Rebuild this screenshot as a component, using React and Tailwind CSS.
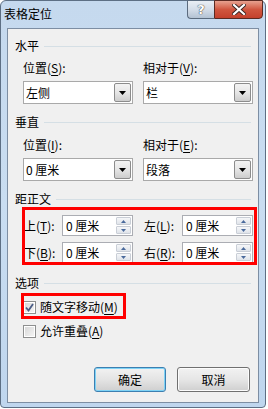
import React from 'react';

function U({ children }) {
  return <span className="underline underline-offset-[2px] decoration-[1px]">{children}</span>;
}

function Header({ title, className = '' }) {
  return (
    <div className={`flex items-center h-[14px] pl-[7px] pr-[7px] gap-[5px] ${className}`}>
      <span className="leading-none">{title}</span>
      <div className="flex-1 h-px bg-[#d5dfe5]" />
    </div>
  );
}

function Combo({ value }) {
  return (
    <div className="h-[23px] flex bg-white border border-[#a9a9a9]">
      <div className="flex-1 flex items-center pl-[2px] leading-none">{value}</div>
      <div className="w-[17px] m-px ml-0 border border-[#8c8c8c] rounded-[2px] bg-gradient-to-b from-[#f3f3f3] via-[#e6e6e6] to-[#cdcdcd] flex items-center justify-center">
        <svg width="7" height="4" viewBox="0 0 7 4"><path d="M0 0h7L3.5 4z" fill="#000" /></svg>
      </div>
    </div>
  );
}

function Spin({ value }) {
  return (
    <div className="w-[71px] h-[21px] flex bg-white border border-[#abadb3]">
      <div className="flex-1 flex items-center pl-[3px] leading-none">{value}</div>
      <div className="w-[15px] flex flex-col gap-px py-px mr-px">
        <div className="flex-1 border border-[#c9ced6] rounded-[1px] bg-gradient-to-b from-[#f6f7f9] to-[#dfe3e9] flex items-center justify-center">
          <svg width="5" height="3" viewBox="0 0 5 3"><path d="M2.5 0L5 3H0z" fill="#4a6a9c" /></svg>
        </div>
        <div className="flex-1 border border-[#c9ced6] rounded-[1px] bg-gradient-to-b from-[#f6f7f9] to-[#dfe3e9] flex items-center justify-center">
          <svg width="5" height="3" viewBox="0 0 5 3"><path d="M0 0h5L2.5 3z" fill="#4a6a9c" /></svg>
        </div>
      </div>
    </div>
  );
}

function SpinField({ label, k, rest, value }) {
  return (
    <div className="flex items-center">
      <span className="w-[39px] pl-px leading-none">{label}(<U>{k}</U>){rest}</span>
      <Spin value={value} />
    </div>
  );
}

function Check({ checked }) {
  return (
    <div className="w-[13px] h-[13px] border border-[#8e8f8f] bg-white p-px">
      <div className="w-full h-full bg-gradient-to-br from-[#d9d9d9] to-[#f4f4f4] flex items-center justify-center">
        {checked && (
          <svg width="9" height="9" viewBox="0 0 9 9">
            <path d="M1 4.5L3.5 7.5L8 1" stroke="#4b5d86" strokeWidth="1.8" fill="none" />
          </svg>
        )}
      </div>
    </div>
  );
}

export default function App() {
  return (
    <div className="w-[268px] h-[409px] bg-white font-['Noto_Sans_CJK_SC',sans-serif] text-[12px] text-black">
      <div className="relative w-[266px] h-[408px] rounded-t-[6px] rounded-b-[4px] border border-[#5d6f84] bg-gradient-to-b from-[#c5d9ee] via-[#c9ddf1] to-[#bfd6ee] px-[6px]">
        {/* title bar */}
        <div className="h-[27px] flex items-start">
          <span className="mt-[7px] -ml-[3px] text-[12px] leading-none">表格定位</span>
          <div className="ml-auto -mr-[4px] flex -mt-px">
            <div className="w-[27px] h-[19px] rounded-bl-[4px] border border-[#5b6b7e] border-r-0 bg-gradient-to-b from-[#e9eef4] via-[#d4dde8] to-[#b3c2d3] flex items-center justify-center">
              <span className="text-white font-['DejaVu_Sans',sans-serif] font-bold text-[13px] leading-none [text-shadow:0_0_1px_#333,0_0_1px_#333]">?</span>
            </div>
            <div className="w-[49px] h-[19px] rounded-br-[4px] border border-[#5b2a22] bg-gradient-to-b from-[#e7a18f] via-[#d0563f] to-[#c3402c] flex items-center justify-center">
              <svg width="14" height="11" viewBox="0 0 14 11">
                <path d="M2 1l10 9M12 1L2 10" stroke="#3a2420" strokeWidth="4" strokeLinecap="square" />
                <path d="M2 1l10 9M12 1L2 10" stroke="#fff" strokeWidth="2.2" strokeLinecap="square" />
              </svg>
            </div>
          </div>
        </div>

        {/* client area */}
        <div className="h-[375px] border border-[#7d8ea3] bg-[#f0f0f0] pt-[10px]">
          <Header title="水平" />
          <div className="grid grid-cols-[110px_110px] gap-x-[10px] pl-[15px] mt-[9px]">
            <span className="h-[14px] leading-none">位置(<U>S</U>):</span>
            <span className="h-[14px] leading-none">相对于(<U>V</U>):</span>
            <div className="mt-[5px]"><Combo value="左侧" /></div>
            <div className="mt-[5px]"><Combo value="栏" /></div>
          </div>

          <Header title="垂直" className="mt-[11px]" />
          <div className="grid grid-cols-[110px_110px] gap-x-[10px] pl-[15px] mt-[10px]">
            <span className="h-[14px] leading-none">位置(<U>I</U>):</span>
            <span className="h-[14px] leading-none">相对于(<U>E</U>):</span>
            <div className="mt-[5px]"><Combo value="0 厘米" /></div>
            <div className="mt-[5px]"><Combo value="段落" /></div>
          </div>

          <Header title="距正文" className="mt-[11px]" />
          <div className="relative ml-[15px] w-[230px] mt-[9px] grid grid-cols-[110px_110px] gap-x-[10px] gap-y-[6px]">
            <SpinField label="上" k="T" rest=":" value="0 厘米" />
            <SpinField label="左" k="L" rest=":" value="0 厘米" />
            <SpinField label="下" k="B" rest=":" value="0 厘米" />
            <SpinField label="右" k="R" rest=":" value="0 厘米" />
            <div className="absolute -left-[1px] -right-[4px] -top-[8px] -bottom-[2px] border-[3px] border-[#ff0000] pointer-events-none" />
          </div>

          <Header title="选项" className="mt-[13px]" />
          <div className="relative ml-[15px] mt-[10px] h-[14px] flex items-center gap-[4px]">
            <Check checked />
            <span className="leading-none">随文字移动(<U>M</U>)</span>
            <div className="absolute -left-[2px] -top-[7px] w-[105px] h-[26px] border-[3px] border-[#ff0000] pointer-events-none" />
          </div>
          <div className="ml-[15px] mt-[10px] h-[14px] flex items-center gap-[4px]">
            <Check />
            <span className="leading-none">允许重叠(<U>A</U>)</span>
          </div>

          <div className="flex justify-end gap-[11px] pr-[8px] mt-[29px]">
            <button className="w-[72px] h-[25px] rounded-[3px] border border-[#3c7fb1] shadow-[inset_0_0_0_1px_#7fd3f6] bg-gradient-to-b from-[#f2f2f2] via-[#e4e4e4] to-[#cfcfcf] leading-none">确定</button>
            <button className="w-[73px] h-[25px] rounded-[3px] border border-[#707070] shadow-[inset_0_0_0_1px_#fcfcfc] bg-gradient-to-b from-[#f2f2f2] via-[#e6e6e6] to-[#cfcfcf] leading-none">取消</button>
          </div>
        </div>
      </div>
    </div>
  );
}
